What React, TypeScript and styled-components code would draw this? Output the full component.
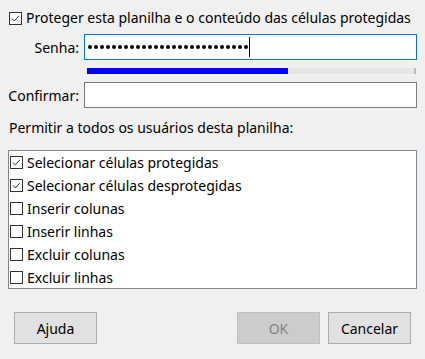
import * as React from 'react';
import styled, { createGlobalStyle } from 'styled-components';

const GlobalStyle = createGlobalStyle`
  html, body {
    margin: 0;
    padding: 0;
    background: #f0f0f0;
  }
  body {
    font-family: "Noto Sans", "Open Sans", sans-serif;
    font-size: 14px;
    color: #000;
  }
`;

const Dialog = styled.div`
  width: 425px;
  height: 359px;
  box-sizing: border-box;
  background: #f0f0f0;
  display: flex;
  flex-direction: column;
  padding: 9px 8px 0 8px;
`;

const CheckRow = styled.label<{ $h?: number }>`
  display: flex;
  align-items: center;
  gap: 4px;
  height: ${(p) => p.$h || 23}px;
  line-height: 1;
  white-space: nowrap;
  padding-left: 1px;
`;

const FieldGrid = styled.div`
  display: grid;
  grid-template-columns: 72px 333px;
  column-gap: 4px;
  align-items: center;
  margin-top: 7px;
`;

const Label = styled.span`
  text-align: right;
  white-space: nowrap;
  padding-right: 1px;
`;

const Input = styled.div<{ $focused?: boolean }>`
  height: 26px;
  box-sizing: border-box;
  background: #fff;
  border: 1px solid ${(p) => (p.$focused ? '#0078d7' : '#7a7a7a')};
  display: flex;
  align-items: center;
  padding-left: 3px;
`;

const Dots = styled.span`
  display: flex;
  gap: 2px;
`;

const Dot = styled.span`
  width: 4px;
  height: 4px;
  border-radius: 50%;
  background: #000;
`;

const Caret = styled.span`
  width: 1px;
  height: 20px;
  background: #000;
  margin-left: 1px;
`;

const Meter = styled.div`
  grid-column: 2;
  height: 6px;
  margin: 8px 1px 8px 3px;
  background: #e6e6e6;
  border-right: 2px solid #bcbcbc;
  display: flex;
`;

const MeterFill = styled.div`
  background: #0000ff;
  height: 100%;
`;

const Caption = styled.div`
  margin: 10px 0 0 1px;
  height: 20px;
  line-height: 20px;
`;

const ListBox = styled.div`
  margin-top: 12px;
  height: 139px;
  box-sizing: border-box;
  background: #fff;
  border: 1px solid #828790;
`;

const Buttons = styled.div`
  display: flex;
  align-items: center;
  margin-top: 23px;
  padding: 0 6px;
`;

const Button = styled.button<{ $disabled?: boolean }>`
  width: 83px;
  height: 32px;
  box-sizing: border-box;
  font: inherit;
  font-size: 14px;
  background: ${(p) => (p.$disabled ? '#cccccc' : '#e1e1e1')};
  border: 1px solid ${(p) => (p.$disabled ? '#bfbfbf' : '#adadad')};
  color: ${(p) => (p.$disabled ? '#838383' : '#000')};
  padding: 0;
`;

const Spacer = styled.div`
  flex: 1;
`;

const ButtonGap = styled.div`
  width: 8px;
`;

const Box: React.FC<{ checked?: boolean }> = ({ checked }) => (
  <svg width="13" height="13" viewBox="0 0 13 13" style={{ flex: 'none' }}>
    <rect x="0.5" y="0.5" width="12" height="12" fill="#fff" stroke="#333" />
    {checked && <path d="M3 6.5 L5.3 9 L10 3.8" fill="none" stroke="#333" strokeWidth="1" />}
  </svg>
);

const options = [
  { text: 'Selecionar células protegidas', checked: true },
  { text: 'Selecionar células desprotegidas', checked: true },
  { text: 'Inserir colunas', checked: false },
  { text: 'Inserir linhas', checked: false },
  { text: 'Excluir colunas', checked: false },
  { text: 'Excluir linhas', checked: false },
];

const App: React.FC = () => {
  return (
    <>
      <GlobalStyle />
      <Dialog>
        <CheckRow $h={18}>
          <Box checked />
          Proteger esta planilha e o conteúdo das células protegidas
        </CheckRow>
        <FieldGrid>
          <Label>Senha:</Label>
          <Input $focused>
            <Dots>
              {Array.from({ length: 27 }).map((_, i) => (
                <Dot key={i} />
              ))}
            </Dots>
            <Caret />
          </Input>
          <Meter>
            <MeterFill style={{ width: '61.5%' }} />
          </Meter>
          <Label>Confirmar:</Label>
          <Input />
        </FieldGrid>
        <Caption>Permitir a todos os usuários desta planilha:</Caption>
        <ListBox>
          {options.map((o) => (
            <CheckRow key={o.text}>
              <Box checked={o.checked} />
              {o.text}
            </CheckRow>
          ))}
        </ListBox>
        <Buttons>
          <Button>Ajuda</Button>
          <Spacer />
          <Button $disabled>OK</Button>
          <ButtonGap />
          <Button>Cancelar</Button>
        </Buttons>
      </Dialog>
    </>
  );
};

export default App;
